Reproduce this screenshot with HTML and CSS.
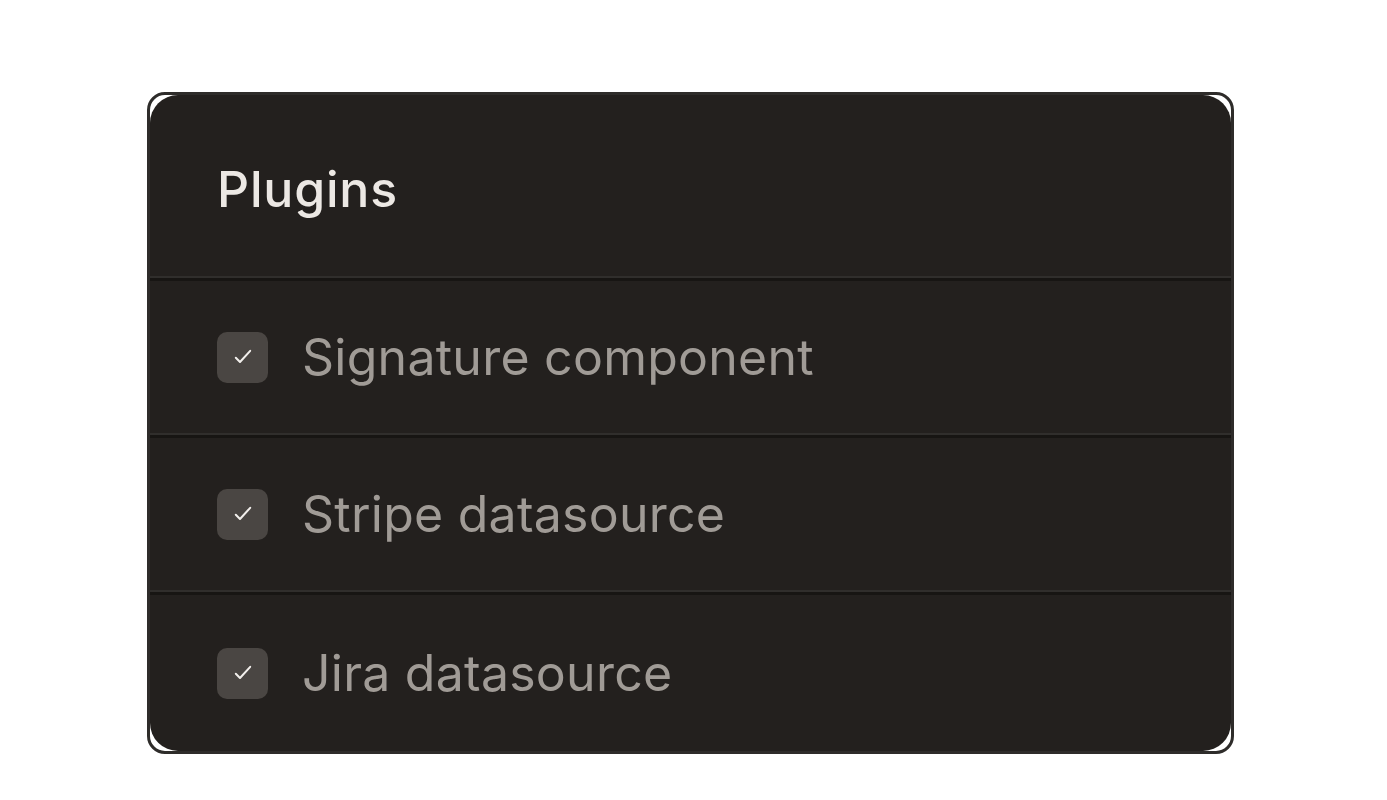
FILE: index.html
```html
<!DOCTYPE html>
<html>
<head>
<meta charset="utf-8">
<link rel="stylesheet" href="styles.css">
</head>
<body>
<div class="page">
  <div class="card">
    <div class="inner">
      <div class="header">Plugins</div>
      <div class="row">
        <span class="check"><svg width="20" height="20" viewBox="0 0 20 20"><path d="M2.8 10.8L7 15L17.2 3.8" fill="none" stroke="#f2efec" stroke-width="2" stroke-linecap="round" stroke-linejoin="round"/></svg></span>
        <span class="label">Signature component</span>
      </div>
      <div class="row">
        <span class="check"><svg width="20" height="20" viewBox="0 0 20 20"><path d="M2.8 10.8L7 15L17.2 3.8" fill="none" stroke="#f2efec" stroke-width="2" stroke-linecap="round" stroke-linejoin="round"/></svg></span>
        <span class="label">Stripe datasource</span>
      </div>
      <div class="row last">
        <span class="check"><svg width="20" height="20" viewBox="0 0 20 20"><path d="M2.8 10.8L7 15L17.2 3.8" fill="none" stroke="#f2efec" stroke-width="2" stroke-linecap="round" stroke-linejoin="round"/></svg></span>
        <span class="label">Jira datasource</span>
      </div>
    </div>
  </div>
</div>
</body>
</html>
```
FILE: styles.css
```css
html, body { margin: 0; padding: 0; background: #ffffff; }
body { font-family: Inter, "Noto Sans", sans-serif; }
.page { padding: 92px 0 0 147px; }
.card {
  width: 1087px;
  height: 662px;
  box-sizing: border-box;
  border: 3px solid #2e2c2a;
  border-radius: 18px;
  background: #ffffff;
}
.inner {
  height: 100%;
  border-radius: 28px;
  background: #23201e;
  overflow: hidden;
  display: flex;
  flex-direction: column;
}
.header {
  height: 181px;
  box-sizing: border-box;
  padding-left: 67px;
  padding-top: 6px;
  display: flex;
  align-items: center;
  color: #ece8e4;
  font-size: 50px;
  font-weight: 500;
  letter-spacing: 0.8px;
}
.row {
  height: 157px;
  box-sizing: border-box;
  border-top: 2px solid #302e2c;
  box-shadow: inset 0 3px 0 #171513;
  padding-left: 67px;
  padding-top: 3px;
  display: flex;
  align-items: center;
  gap: 34px;
}
.row.last { flex: 1; }
.check {
  width: 51px;
  height: 51px;
  border-radius: 10px;
  background: #4a4643;
  display: flex;
  align-items: center;
  justify-content: center;
  flex: none;
}
.label {
  color: #a09b96;
  font-size: 50px;
  font-weight: 400;
  letter-spacing: 0.25px;
}
```
